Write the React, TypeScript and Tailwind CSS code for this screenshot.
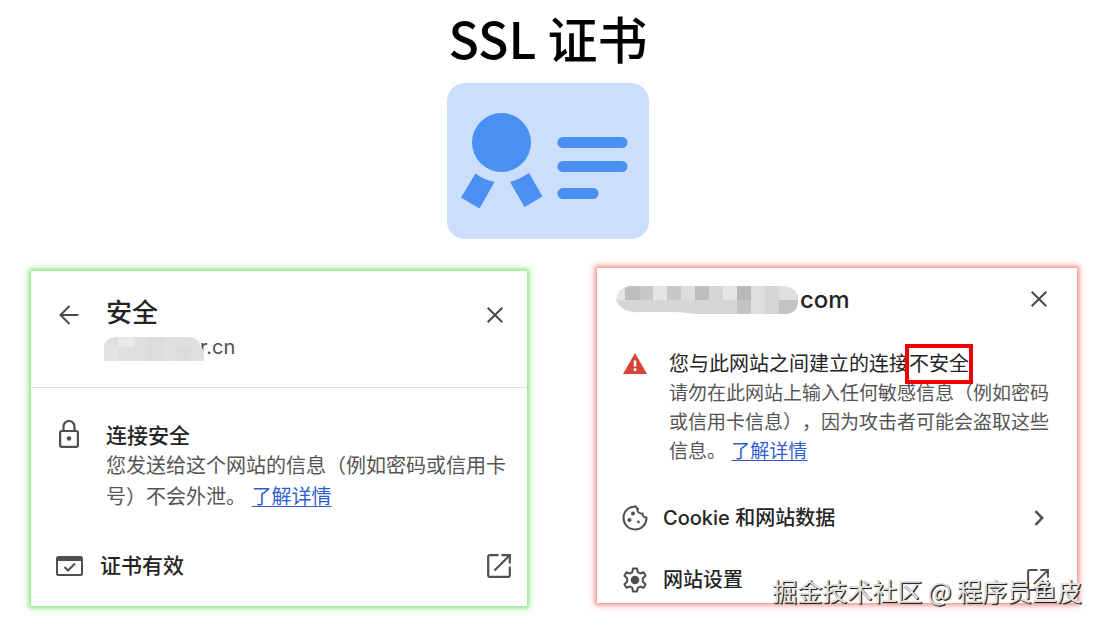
import React, { ReactNode } from "react";

type IconProps = { className?: string };

const CertificateIcon: React.FC = () => {
  return (
    <svg
      width="202"
      height="156"
      viewBox="0 0 202 156"
      fill="#4a90f2"
      aria-hidden="true"
    >
      <rect width="202" height="156" rx="18" fill="#cbdefc" />
      <circle cx="54.5" cy="59.5" r="29.5" />
      <path d="M28.5 90.5C34 94.500 40 97.500 47.500 99L32.500 125.500L14 114.500Z" />
      <path d="M63 99C69.500 97 76 94 82 90L95.500 113.500L77.500 124Z" />
      <rect x="110.500" y="54" width="70" height="11" rx="5.500" />
      <rect x="110.500" y="78" width="70" height="11" rx="5.500" />
      <rect x="110.500" y="105" width="41" height="11" rx="5.500" />
    </svg>
  );
};

const ArrowLeftIcon: React.FC<IconProps> = ({ className }) => {
  return (
    <svg
      className={className}
      width="20"
      height="20"
      viewBox="0 0 20 20"
      fill="none"
      stroke="currentColor"
      strokeWidth="2"
      aria-hidden="true"
    >
      <path d="M19.500 10H1.800M10.500 1L1.500 10L10.500 19" />
    </svg>
  );
};

const CloseIcon: React.FC<IconProps> = ({ className }) => {
  return (
    <svg
      className={className}
      width="16"
      height="16"
      viewBox="0 0 16 16"
      fill="none"
      stroke="currentColor"
      strokeWidth="2"
      aria-hidden="true"
    >
      <path d="M0.700 0.700L15.300 15.300M15.300 0.700L0.700 15.300" />
    </svg>
  );
};

const LockIcon: React.FC = () => {
  return (
    <svg
      width="20"
      height="28"
      viewBox="0 0 20 28"
      fill="none"
      stroke="currentColor"
      strokeWidth="2.200"
      aria-hidden="true"
    >
      <rect x="1.100" y="11" width="17.800" height="15.800" rx="1.500" />
      <path d="M4.500 11V6.500a5.500 5.500 0 0 1 11 0V11" />
      <circle cx="10" cy="18.500" r="2.300" fill="currentColor" stroke="none" />
    </svg>
  );
};

const CertificateValidIcon: React.FC = () => {
  return (
    <svg
      width="27"
      height="20"
      viewBox="0 0 27 20"
      fill="none"
      stroke="currentColor"
      strokeWidth="2"
      aria-hidden="true"
    >
      <rect x="1" y="1" width="25" height="18" rx="1.500" />
      <path d="M1 3H26" strokeWidth="4" />
      <path d="M8.500 11L12 14.500L19 7.500" />
    </svg>
  );
};

const OpenIcon: React.FC<IconProps> = ({ className }) => {
  return (
    <svg
      className={className}
      viewBox="0 0 24 24"
      fill="none"
      stroke="currentColor"
      strokeWidth="2.200"
      aria-hidden="true"
    >
      <path d="M11.500 1.200H2.500a1.300 1.300 0 0 0-1.300 1.300V21.500a1.300 1.300 0 0 0 1.300 1.300H21.500a1.300 1.300 0 0 0 1.300-1.300V12.500" />
      <path d="M14.500 1.200H22.800V9.500M22.800 1.200L7.500 16.500" />
    </svg>
  );
};

const WarningIcon: React.FC = () => {
  return (
    <svg width="24" height="21" viewBox="0 0 24 21" aria-hidden="true">
      <path d="M12 0L24 21H0Z" fill="#d5443a" />
      <path d="M10.700 7.500h2.600v6h-2.600zM10.700 15.300h2.600v2.600h-2.600z" fill="#fff" />
    </svg>
  );
};

const CookieIcon: React.FC = () => {
  return (
    <svg
      width="26"
      height="26"
      viewBox="0 0 26 26"
      fill="none"
      stroke="currentColor"
      strokeWidth="2"
      strokeLinejoin="round"
      aria-hidden="true"
    >
      <path d="M14 1.500A11.500 11.500 0 1 0 24.500 12.500C22.500 12.500 20.500 11 20.500 8.500C17.500 9 14.500 6.500 16 4C15 3.500 14 2.800 14 1.500Z" />
      <g fill="currentColor" stroke="none">
        <circle cx="11" cy="8.500" r="2" />
        <circle cx="7.500" cy="15" r="2" />
        <circle cx="16.500" cy="17" r="1.400" />
      </g>
    </svg>
  );
};

const SettingsIcon: React.FC = () => {
  return (
    <svg
      width="26"
      height="26"
      viewBox="0 0 26 26"
      fill="none"
      stroke="currentColor"
      strokeWidth="2"
      strokeLinejoin="round"
      aria-hidden="true"
    >
      <path d="M11 1.500H15L15.700 5.200L18 6.500L21.600 5.300L23.600 8.700L20.800 11.200V14.800L23.600 17.300L21.600 20.700L18 19.500L15.700 20.800L15 24.500H11L10.300 20.800L8 19.500L4.400 20.700L2.400 17.300L5.200 14.800V11.200L2.400 8.700L4.400 5.300L8 6.500L10.300 5.200Z" />
      <circle cx="13" cy="13" r="4.300" fill="currentColor" stroke="none" />
    </svg>
  );
};

const ChevronIcon: React.FC = () => {
  return (
    <svg
      width="10"
      height="16"
      viewBox="0 0 10 16"
      fill="none"
      stroke="currentColor"
      strokeWidth="2.500"
      aria-hidden="true"
    >
      <path d="M1.500 1.200L8.200 8L1.500 14.800" />
    </svg>
  );
};

const MaskedName: React.FC = () => {
  return (
    <svg
      className="relative"
      width="100"
      height="24"
      viewBox="0 0 100 24"
      aria-hidden="true"
    >
      <path d="M0 24V12Q0 0 14 0H84Q94 0 96 8L100 14V24Z" fill="#dfdfdf" />
      <path d="M0 24V12Q0 8 2 8H14V24Z" fill="#e4e4e4" />
      <path d="M14 0H30V10H14Z" fill="#e9e9e9" />
      <path d="M44 0H58V24H44ZM72 10H86V24H72Z" fill="#dcdcdc" />
    </svg>
  );
};

const MaskedHost: React.FC = () => {
  return (
    <svg width="182" height="28" viewBox="0 0 182 28" aria-hidden="true">
      <clipPath id="host-shape">
        <path d="M14 0H168Q182 2 182 14Q182 28 168 28H78Q68 26 56 26H26Q6 28 0 14Q2 2 14 0Z" />
      </clipPath>
      <g clipPath="url(#host-shape)">
        <path d="M0 0H182V28H0Z" fill="#d6d6d6" />
        <path d="M0 0H9V14H0ZM37 0H51V14H37ZM107 0H121V14H107Z" fill="#e5e5e5" />
        <path d="M9 0H24V14H9ZM79 0H93V14H79Z" fill="#bdbdbd" />
        <path d="M24 0H37V14H24ZM51 0H65V14H51Z" fill="#c8c8c8" />
        <path d="M65 0H79V14H65ZM135 0H149V28H135Z" fill="#dedede" />
        <path d="M121 0H135V14H121Z" fill="#b9b9b9" />
        <path d="M121 14H135V28H121ZM163 14H182V28H163Z" fill="#c3c3c3" />
        <path d="M163 0H182V14H163Z" fill="#dfdfdf" />
      </g>
    </svg>
  );
};

const DetailsLink: React.FC = () => {
  return (
    <a
      href="#details"
      className="text-[#2f5fcf] underline decoration-1 underline-offset-2"
    >
      了解详情
    </a>
  );
};

const CloseButton: React.FC = () => {
  return (
    <button type="button" aria-label="关闭" className="text-[#4a4a4a]">
      <CloseIcon />
    </button>
  );
};

const MenuRow: React.FC<{
  icon: ReactNode;
  label: string;
  trailing: ReactNode;
  className: string;
}> = ({ icon, label, trailing, className }) => {
  return (
    <button
      type="button"
      className={`flex w-full items-center text-left font-medium text-[#242424] ${className}`}
    >
      <span className="text-[#4f4f4f]">{icon}</span>
      <span>{label}</span>
      <span className="ml-auto text-[#4f4f4f]">{trailing}</span>
    </button>
  );
};

const SecureCard: React.FC = () => {
  return (
    <section className="mt-[3px] min-w-0 flex-[496] bg-white pb-6 shadow-[0_0_4px_2px_#93e68d,0_0_9px_3px_#d4f9d1]">
      <header className="flex items-start justify-between border-b border-[#dcdfe6] pt-6 pr-6 pb-6 pl-7">
        <div className="flex gap-[27px]">
          <button
            type="button"
            aria-label="返回"
            className="mt-2.5 h-5 text-[#4a4a4a]"
          >
            <ArrowLeftIcon />
          </button>
          <div>
            <h2 className="text-[26px] leading-9 font-medium text-[#242424]">
              安全
            </h2>
            <div className="-ml-0.5 flex h-8 items-center pt-1 text-xl text-[#505050]">
              <MaskedName />
              <span className="-ml-1 pb-1">r.cn</span>
            </div>
          </div>
        </div>
        <div className="mt-2.5">
          <CloseButton />
        </div>
      </header>
      <div className="flex gap-[27px] pt-8 pr-2 pl-7">
        <span className="text-[#4f4f4f]">
          <LockIcon />
        </span>
        <div className="whitespace-nowrap">
          <h3 className="text-[21px] leading-[31px] font-medium text-[#242424]">
            连接安全
          </h3>
          <p className="text-xl leading-[31px] text-[#555]">
            您发送给这个网站的信息（例如密码或信用卡
            <br />
            号）不会外泄。 <DetailsLink />
          </p>
        </div>
      </div>
      <MenuRow
        className="mt-[37px] gap-[17px] pr-4 pl-[25px] text-[21px] leading-8"
        icon={<CertificateValidIcon />}
        label="证书有效"
        trailing={<OpenIcon className="size-6" />}
      />
    </section>
  );
};

const InsecureCard: React.FC = () => {
  return (
    <section className="min-w-0 flex-[480] bg-white pb-[7px] shadow-[0_0_4px_2px_#f09a96,0_0_9px_3px_#fbdad8]">
      <header className="flex items-center justify-between pt-3 pr-[30px] pl-[19px]">
        <div className="flex items-center gap-0.5 pt-0.5 text-2xl leading-9 font-medium text-[#242424]">
          <MaskedHost />
          <h2>com</h2>
        </div>
        <CloseButton />
      </header>
      <div className="flex gap-[22px] pt-[31px] pr-2 pl-[26px]">
        <span className="pt-1">
          <WarningIcon />
        </span>
        <div className="whitespace-nowrap">
          <h3 className="text-xl leading-[30px] text-[#242424]">
            您与此网站之间建立的连接
            <span className="relative">
              不安全
              <span className="absolute -inset-x-1 -top-2 -bottom-2 border-4 border-[#ee0000]" />
            </span>
          </h3>
          <p className="text-[19px] leading-[29px] text-[#555]">
            请勿在此网站上输入任何敏感信息（例如密码
            <br />
            或信用卡信息），因为攻击者可能会盗取这些
            <br />
            信息。 <DetailsLink />
          </p>
        </div>
      </div>
      <MenuRow
        className="mt-9 gap-[15px] pr-[33px] pl-[25px] text-xl leading-8"
        icon={<CookieIcon />}
        label="Cookie 和网站数据"
        trailing={<ChevronIcon />}
      />
      <MenuRow
        className="mt-[30px] gap-[15px] pr-7 pl-[25px] text-xl leading-8"
        icon={<SettingsIcon />}
        label="网站设置"
        trailing={<OpenIcon className="size-[22px]" />}
      />
    </section>
  );
};

export default function App() {
  return (
    <main className="relative min-h-screen overflow-hidden bg-white font-['Inter','Noto_Sans_CJK_SC',sans-serif] [text-spacing-trim:space-all]">
      <header className="flex flex-col items-center gap-3 pt-1 pr-1.5">
        <h1 className="font-['Noto_Sans_CJK_SC',sans-serif] text-[50px] leading-[67px] font-medium text-black">
          SSL 证书
        </h1>
        <CertificateIcon />
      </header>
      <div className="flex items-start gap-[70px] pt-[29px] pr-[25px] pl-[31px]">
        <SecureCard />
        <InsecureCard />
      </div>
      <p className="absolute right-5 bottom-[18px] font-['Noto_Sans_CJK_SC',sans-serif] text-[25px] leading-9 whitespace-nowrap text-[#e2e2e2] [text-shadow:1px_1px_0_#222,1px_1px_1px_#222]">
        掘金技术社区 @ 程序员鱼皮
      </p>
    </main>
  );
}
